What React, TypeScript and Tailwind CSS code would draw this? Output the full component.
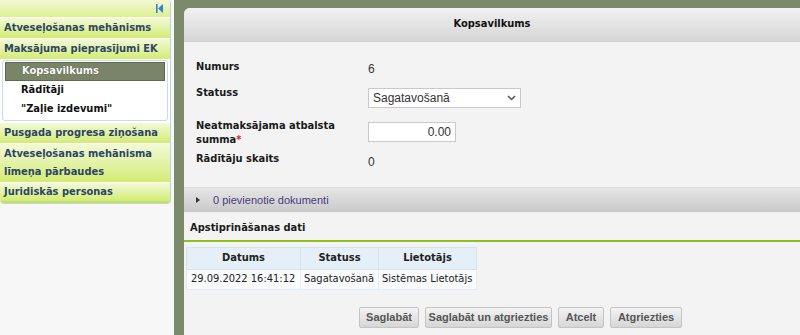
import React from 'react';

const tahoma = "font-['DejaVu_Sans_Condensed','DejaVu_Sans',sans-serif]";
const arial = "font-['Liberation_Sans',Arial,sans-serif]";

function MenuRow({ children, className = '' }: { children: React.ReactNode; className?: string }) {
  return (
    <div
      className={`border-t border-white bg-gradient-to-b from-[#f3f9d6] to-[#d3ec70] px-[4px] text-[11px] font-bold text-[#2d4566] ${className}`}
    >
      {children}
    </div>
  );
}

function SubItem({ label, active }: { label: string; active?: boolean }) {
  if (active) {
    return (
      <div className="mx-[2px] flex h-[19px] items-center border border-[#5e684f] bg-[#7a8567] pl-[16px] text-[11px] font-bold text-white [text-shadow:0_0_1px_#333]">
        {label}
      </div>
    );
  }
  return <div className="flex h-[19px] items-center pl-[18px] text-[11px] font-bold text-[#111]">{label}</div>;
}

function Btn({ label, w }: { label: string; w: string }) {
  return (
    <button
      className={`${w} h-[21px] rounded-[2px] border border-[#c4c4c4] bg-gradient-to-b from-[#f4f4f4] to-[#d6d6d6] text-[11px] font-bold text-[#555] ${arial}`}
    >
      {label}
    </button>
  );
}

export default function App() {
  return (
    <div className={`flex h-[335px] w-[800px] overflow-hidden bg-[#f7f7f7] ${tahoma}`}>
      {/* Sidebar */}
      <aside className="w-[174px] shrink-0 pr-[3px]">
        <div className="overflow-hidden rounded-b-[4px] rounded-tr-[4px] border-r border-b border-[#bcd3e6] bg-white">
          <div className="flex h-[17px] items-center justify-end bg-gradient-to-b from-[#f3f9d6] to-[#dcf08e] pr-[7px]">
            <svg width="7" height="9" viewBox="0 0 7 9">
              <rect x="0" y="0" width="1.6" height="9" fill="#3b7fd4" />
              <polygon points="7,0 2,4.5 7,9" fill="#3b7fd4" />
            </svg>
          </div>
          <MenuRow className="flex h-[21px] items-center">Atveseļošanas mehānisms</MenuRow>
          <MenuRow className="flex h-[21px] items-center">Maksājuma pieprasījumi EK</MenuRow>
          <div className="mx-[2px] my-[1px] rounded-[3px] border border-[#c6dbec] bg-white pt-[1px] pb-[1px]">
            <SubItem label="Kopsavilkums" active />
            <SubItem label="Rādītāji" />
            <SubItem label={'"Zaļie izdevumi"'} />
          </div>
          <MenuRow className="flex h-[21px] items-center">Pusgada progresa ziņošana</MenuRow>
          <MenuRow className="py-[1px] leading-[18px]">Atveseļošanas mehānisma līmeņa pārbaudes</MenuRow>
          <MenuRow className="flex h-[21px] items-center border-b-2 border-b-[#c6e25a]">Juridiskās personas</MenuRow>
        </div>
      </aside>

      {/* Main */}
      <main className="flex-1 bg-[#7b8a6b] pt-[8px] pl-[10px]">
        <div className="h-full rounded-tl-[6px] bg-[#f3f3f3]">
          <div className="flex h-[34px] items-center justify-center rounded-tl-[6px] border-b border-[#d0d0d0] bg-gradient-to-b from-[#f1f1f1] to-[#d6d6d6] text-[11px] font-bold text-[#111]">
            Kopsavilkums
          </div>

          <div className="pl-[12px] pt-[18px] text-[11px]">
            <div className="flex h-[26px] items-start">
              <div className="w-[172px] font-bold leading-[14px] text-[#1a1a1a]">Numurs</div>
              <div className={`pt-[2px] text-[12px] leading-[14px] text-[#333] ${arial}`}>6</div>
            </div>
            <div className="flex h-[33px] items-start">
              <div className="w-[172px] font-bold leading-[14px] text-[#1a1a1a]">Statuss</div>
              <div
                className={`mt-[2px] flex h-[20px] w-[153px] items-center justify-between border border-[#c9c9c9] bg-white pr-[4px] pl-[4px] text-[12px] text-[#333] ${arial}`}
              >
                <span>Sagatavošanā</span>
                <svg width="9" height="6" viewBox="0 0 9 6">
                  <path d="M1 1 L4.5 4.5 L8 1" stroke="#555" strokeWidth="1.5" fill="none" />
                </svg>
              </div>
            </div>
            <div className="flex h-[33px] items-start">
              <div className="w-[172px] font-bold leading-[14px] text-[#1a1a1a]">
                Neatmaksājama atbalsta
                <br />
                summa<span className="text-[#e02020]">*</span>
              </div>
              <div
                className={`mt-[3px] flex h-[20px] w-[88px] items-center justify-end border border-[#c9c9c9] bg-white pr-[4px] text-[12px] text-[#333] ${arial}`}
              >
                0.00
              </div>
            </div>
            <div className="flex h-[14px] items-start">
              <div className="w-[172px] font-bold leading-[14px] text-[#1a1a1a]">Rādītāju skaits</div>
              <div className={`pt-[3px] text-[12px] leading-[14px] text-[#333] ${arial}`}>0</div>
            </div>
          </div>

          <div
            className={`mt-[21px] flex h-[25px] items-center border-t border-[#dadada] bg-gradient-to-b from-[#e6e6e6] to-[#c9c9c9] pl-[12px] text-[11px] text-[#4a3a82] ${arial}`}
          >
            <svg width="4" height="6" viewBox="0 0 4 6" className="mr-[13px]">
              <polygon points="0,0 4,3 0,6" fill="#333" />
            </svg>
            0 pievienotie dokumenti
          </div>

          <div className="flex h-[30px] items-center border-b-2 border-[#8dc21b] pl-[6px] pt-[4px] text-[11px] font-bold text-[#1a1a1a]">
            Apstiprināšanas dati
          </div>

          <table className="mt-[5px] ml-[2px] border-collapse text-[11px] text-[#222]">
            <thead>
              <tr className="h-[22px] bg-[#e5eff7] font-bold">
                <th className="w-[114px] border border-[#d3e3ef]">Datums</th>
                <th className="w-[78px] border border-[#d3e3ef]">Statuss</th>
                <th className="w-[98px] border border-[#d3e3ef]">Lietotājs</th>
              </tr>
            </thead>
            <tbody>
              <tr className="h-[20px] bg-[#f8fafc]">
                <td className="border border-[#e3ecf3] px-[4px]">29.09.2022 16:41:12</td>
                <td className="border border-[#e3ecf3] px-[3px]">Sagatavošanā</td>
                <td className="border border-[#e3ecf3] px-[3px]">Sistēmas Lietotājs</td>
              </tr>
            </tbody>
          </table>

          <div className="mt-[17px] flex gap-[6px] pl-[175px]">
            <Btn label="Saglabāt" w="w-[60px]" />
            <Btn label="Saglabāt un atgriezties" w="w-[127px]" />
            <Btn label="Atcelt" w="w-[46px]" />
            <Btn label="Atgriezties" w="w-[72px]" />
          </div>
        </div>
      </main>
    </div>
  );
}
